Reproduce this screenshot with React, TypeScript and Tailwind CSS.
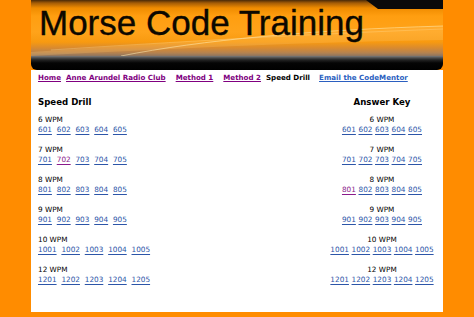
import React from "react";

const speeds = [6, 7, 8, 9, 10, 12];
const visitedLeft = new Set(["702"]);
const visitedRight = new Set(["801"]);

function Links({ wpm, gap, visited }: { wpm: number; gap: string; visited: Set<string> }) {
  const items = [1, 2, 3, 4, 5].map((n) => `${wpm}0${n}`);
  return (
    <div className={`flex ${gap}`}>
      {items.map((id) => (
        <a
          key={id}
          href="#"
          className={`underline decoration-[0.5px] underline-offset-[1.5px] ${
            visited.has(id) ? "text-[#8a1a8a]" : "text-[#2c55a8]"
          }`}
        >
          {id}
        </a>
      ))}
    </div>
  );
}

export default function App() {
  return (
    <div className="w-[474px] h-[317px] overflow-hidden bg-[#ff8c00]">
      <div className="ml-[31px] w-[412px]">
        <header className="flex h-[70px] flex-col">
          <div className="relative h-[56px] overflow-hidden bg-[linear-gradient(180deg,#4a2a08_0px,#a45c06_3px,#f08c00_8px,#ff9e10_16px,#ffa31a_32px,#f89a10_42px,#d88a30_48px,#b48250_53px,#8c7460_56px)]">
            <svg className="absolute left-0 top-0" width="412" height="56" viewBox="0 0 412 56">
              <path d="M0 52 C 120 44, 260 34, 412 26 L 412 40 C 280 42, 150 48, 0 56 Z" fill="rgba(255,200,110,0.25)" />
              <path d="M90 56 C 170 40, 280 30, 412 26" stroke="rgba(255,235,180,0.7)" strokeWidth="0.8" fill="none" />
              <path d="M20 50 C 140 42, 280 34, 412 29" stroke="rgba(255,225,160,0.5)" strokeWidth="0.6" fill="none" />
            </svg>
            <div className="absolute right-0 top-0 h-[9px] w-[77px] bg-[#0a0a0a] [clip-path:polygon(0_0,100%_0,100%_100%,12px_100%)] rounded-bl-[3px]" />
            <h1 className="relative pl-[8px] pt-[5px] text-[35px] leading-[35px] text-[#0c0800] [-webkit-text-stroke:0.35px_#0c0800] [font-family:'Liberation_Sans',Arial,sans-serif]">
              Morse Code Training
            </h1>
          </div>
          <div className="h-[14px] rounded-b-[6px] bg-[linear-gradient(180deg,#7a7a7a_0px,#4a4a4a_2px,#222_4px,#050505_7px,#000_14px)]" />
        </header>
        <main className="h-[242px] bg-white pl-[7px] pr-[6px] pt-[3px] text-black [font-family:'DejaVu_Sans',Verdana,sans-serif]">
          <nav className="flex text-[7.1px] font-bold leading-[10px]">
            <a href="#" className="text-[#800080] underline underline-offset-[1px]">Home</a>
            <a href="#" className="ml-[5px] text-[#800080] underline underline-offset-[1px]">Anne Arundel Radio Club</a>
            <a href="#" className="ml-[10px] text-[#800080] underline underline-offset-[1px]">Method 1</a>
            <a href="#" className="ml-[10px] text-[#800080] underline underline-offset-[1px]">Method 2</a>
            <span className="ml-[5px]">Speed Drill</span>
            <a href="#" className="ml-[9px] text-[#2b5fc0] underline underline-offset-[1px]">Email the CodeMentor</a>
          </nav>
          <div className="mt-[13px] flex justify-between">
            <section className="flex flex-col">
              <h2 className="h-[12px] text-[8.6px] font-bold leading-[12px]">Speed Drill</h2>
              <div className="mt-[7px] flex flex-col gap-[10px] text-[7.3px] leading-[10px]">
                {speeds.map((s) => (
                  <div key={s} className="flex flex-col">
                    <div>{s} WPM</div>
                    <Links wpm={s} gap="gap-[4.8px]" visited={visitedLeft} />
                  </div>
                ))}
              </div>
            </section>
            <section className="flex w-[110px] flex-col items-center">
              <h2 className="h-[12px] text-[8.6px] font-bold leading-[12px]">Answer Key</h2>
              <div className="mt-[7px] flex flex-col items-center gap-[10px] text-[7.3px] leading-[10px]">
                {speeds.map((s) => (
                  <div key={s} className="flex flex-col items-center">
                    <div>{s} WPM</div>
                    <Links wpm={s} gap="gap-[2.6px]" visited={visitedRight} />
                  </div>
                ))}
              </div>
            </section>
          </div>
        </main>
      </div>
    </div>
  );
}
